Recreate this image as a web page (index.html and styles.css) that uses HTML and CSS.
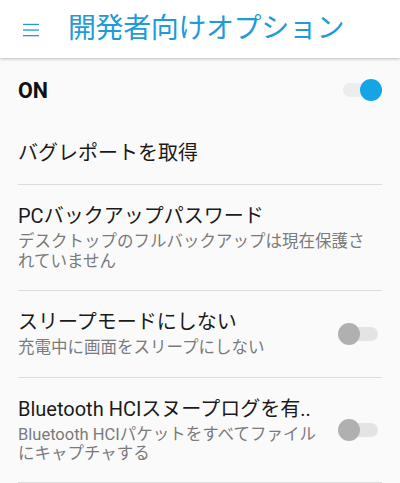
FILE: index.html
```html
<!DOCTYPE html>
<html lang="ja">
<head>
    <meta charset="UTF-8">
    <meta name="viewport" content="width=device-width, initial-scale=1.0">
    <title>開発者向けオプション</title>
    <link rel="stylesheet" href="styles.css">
</head>
<body>

    <header class="app-bar">
        <svg class="menu-icon" width="18" height="14" viewBox="0 0 18 14" aria-hidden="true">
            <rect x="1" y="0.8" width="16" height="1.3" fill="#1f9bd7"/>
            <rect x="1" y="6.4" width="16" height="1.3" fill="#1f9bd7"/>
            <rect x="1" y="12" width="16" height="1.3" fill="#1f9bd7"/>
        </svg>
        <h1>開発者向けオプション</h1>
    </header>

    <main>
        <div class="master-row">
            <span class="master-label">ON</span>
            <span class="switch on"><span class="knob"></span></span>
        </div>

        <div class="pref single">
            <div class="pref-text">
                <div class="pref-title">バグレポートを取得</div>
            </div>
        </div>

        <div class="pref">
            <div class="pref-text wide">
                <div class="pref-title">PCバックアップパスワード</div>
                <div class="pref-summary">デスクトップのフルバックアップは現在保護されていません</div>
            </div>
        </div>

        <div class="pref short">
            <div class="pref-text">
                <div class="pref-title">スリープモードにしない</div>
                <div class="pref-summary">充電中に画面をスリープにしない</div>
            </div>
            <span class="switch"><span class="knob"></span></span>
        </div>

        <div class="pref last">
            <div class="pref-text">
                <div class="pref-title">Bluetooth HCIスヌープログを有..</div>
                <div class="pref-summary">Bluetooth HCIパケットをすべてファイルにキャプチャする</div>
            </div>
            <span class="switch"><span class="knob"></span></span>
        </div>
    </main>

</body>
</html>
```

FILE: styles.css
```css
/* Settings screen */
body {
    margin: 0;
    padding: 0;
    background-color: #fafafa;
    color: #212121;
    font-family: Roboto, "Noto Sans CJK JP", sans-serif;
    overflow: hidden;
}
.app-bar {
    height: 58px;
    background-color: #fff;
    display: flex;
    align-items: center;
    padding-left: 22px;
    box-shadow: 0 1px 3px rgba(0, 0, 0, 0.25);
    position: relative;
    z-index: 1;
}
.menu-icon {
    display: block;
    margin-top: 2px;
}
.app-bar h1 {
    margin: 0 0 0 28px;
    font-size: 28px;
    font-weight: normal;
    color: #1f9bd7;
    line-height: 1;
    letter-spacing: -0.4px;
}
.master-row {
    height: 64px;
    display: flex;
    align-items: center;
    justify-content: space-between;
    padding: 0 18px;
}
.master-label {
    font-size: 21.5px;
    font-weight: bold;
    color: #111;
}
.pref {
    margin: 0 18px;
    min-height: 105px;
    display: flex;
    align-items: center;
    gap: 12px;
    border-bottom: 1px solid #dcdcdc;
}
.pref.single {
    min-height: 62px;
}
.pref.short {
    min-height: 86px;
}
.pref.last {
    min-height: 104px;
}
.pref-text {
    flex: 1;
}
.pref-text.wide {
    padding-right: 12px;
}
.pref-title {
    font-size: 20px;
    line-height: 24px;
    color: #1a1a1a;
    white-space: nowrap;
}
.pref-summary {
    margin-top: 4px;
    font-size: 16.5px;
    line-height: 19.5px;
    color: #7a7a7a;
}
.switch {
    position: relative;
    flex: none;
    width: 44px;
    height: 22px;
}
.switch::before {
    content: "";
    position: absolute;
    left: 5px;
    right: 4px;
    top: 4px;
    height: 14px;
    border-radius: 7px;
    background-color: #e4e4e4;
}
.switch .knob {
    position: absolute;
    left: 0;
    top: 0;
    width: 22px;
    height: 22px;
    border-radius: 50%;
    background-color: #b0b0b0;
}
.switch.on::before {
    background-color: #ededed;
}
.switch.on .knob {
    left: auto;
    right: 0;
    background-color: #14a5e6;
}
```
